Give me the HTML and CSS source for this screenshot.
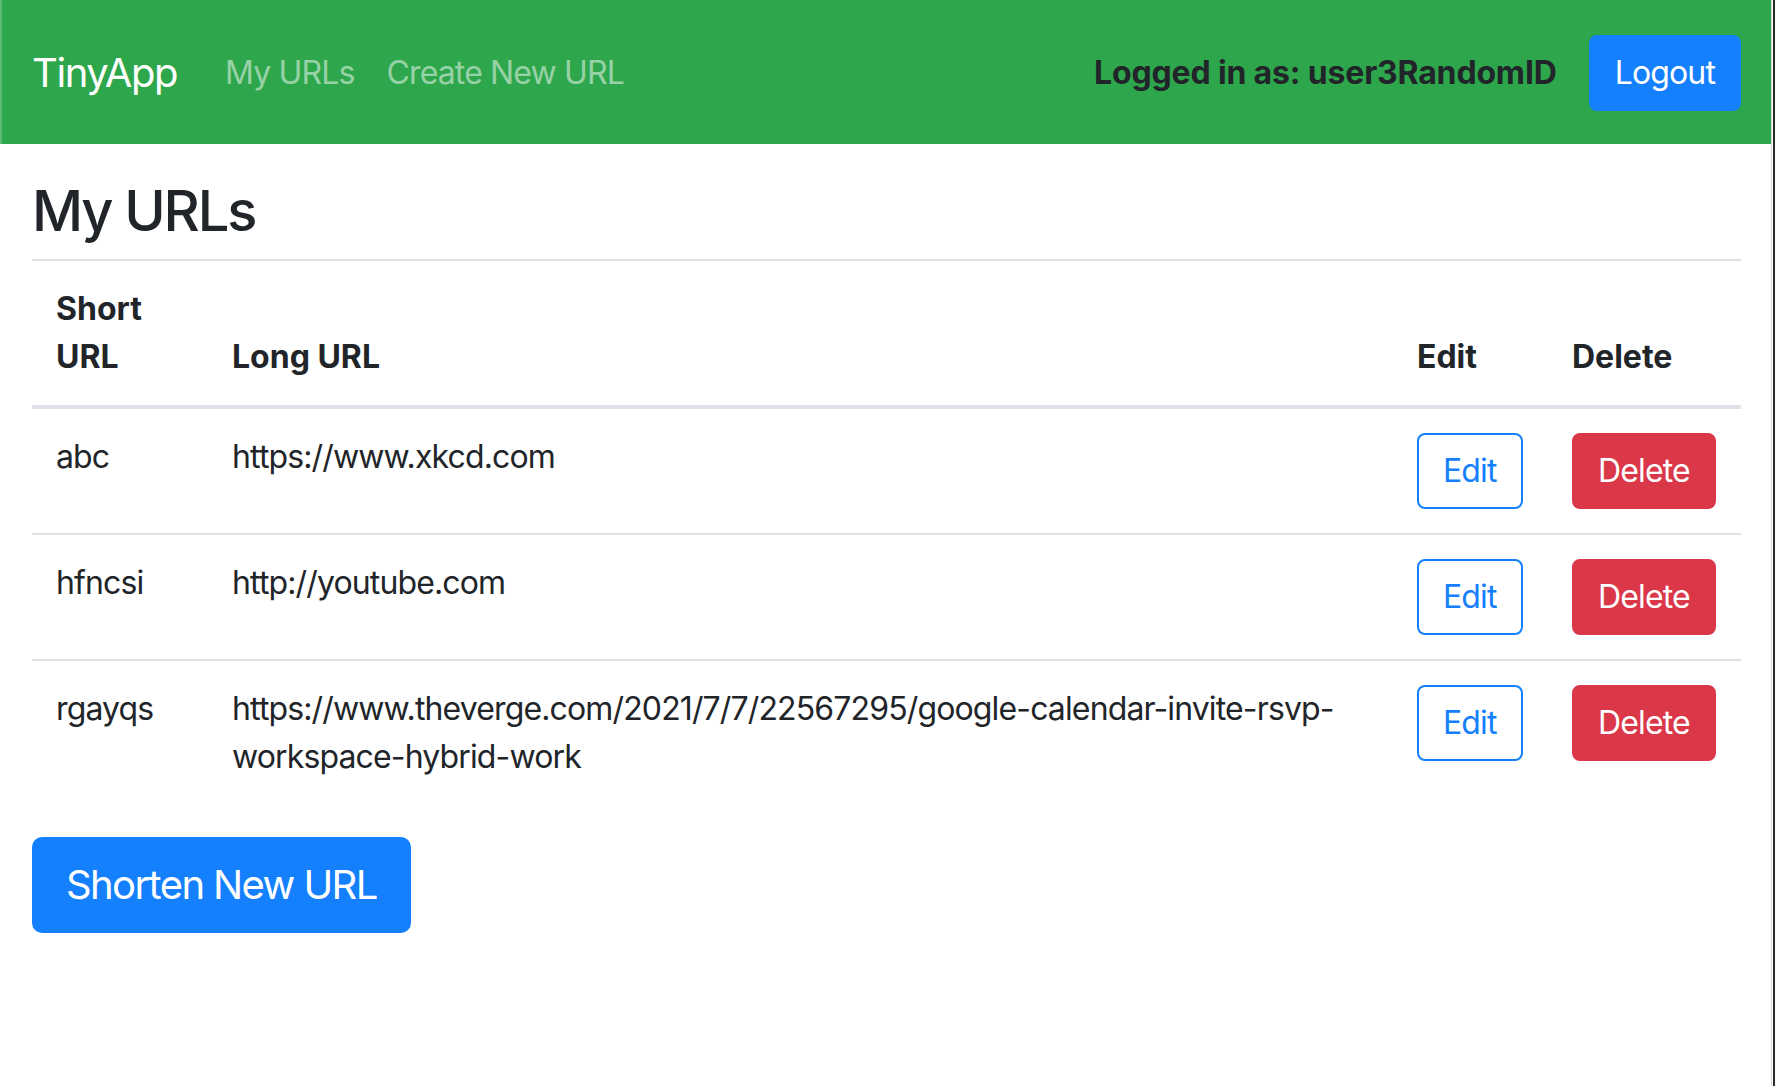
FILE: index.html
```html
<!DOCTYPE html>
<html lang="en">
<head>
<meta charset="utf-8">
<title>TinyApp</title>
<link rel="stylesheet" href="styles.css">
</head>
<body>
<div class="frame">
  <div class="page">
    <nav class="navbar">
      <a class="brand" href="#">TinyApp</a>
      <div class="nav-links">
        <a class="nav-link" href="#">My URLs</a>
        <a class="nav-link" href="#">Create New URL</a>
      </div>
      <div class="nav-right">
        <span class="login-text">Logged in as: user3RandomID</span>
        <button class="btn btn-primary">Logout</button>
      </div>
    </nav>
    <main class="main">
      <h3 class="title">My URLs</h3>
      <table class="table">
        <colgroup>
          <col class="col-short">
          <col class="col-long">
          <col class="col-edit">
          <col class="col-delete">
        </colgroup>
        <thead>
          <tr>
            <th>Short URL</th>
            <th>Long URL</th>
            <th>Edit</th>
            <th>Delete</th>
          </tr>
        </thead>
        <tbody>
          <tr>
            <td>abc</td>
            <td>https://www.xkcd.com</td>
            <td><button class="btn btn-outline">Edit</button></td>
            <td><button class="btn btn-danger">Delete</button></td>
          </tr>
          <tr>
            <td>hfncsi</td>
            <td>http://youtube.com</td>
            <td><button class="btn btn-outline">Edit</button></td>
            <td><button class="btn btn-danger">Delete</button></td>
          </tr>
          <tr>
            <td>rgayqs</td>
            <td>https://www.theverge.com/2021/7/7/22567295/google-calendar-invite-rsvp-workspace-hybrid-work</td>
            <td><button class="btn btn-outline">Edit</button></td>
            <td><button class="btn btn-danger">Delete</button></td>
          </tr>
        </tbody>
      </table>
      <button class="btn btn-primary btn-lg">Shorten New URL</button>
    </main>
  </div>
</div>
</body>
</html>
```
FILE: styles.css
```css
html, body {
  margin: 0;
  padding: 0;
  height: 100%;
  background: #ffffff;
}

body {
  font-family: Inter, "Liberation Sans", sans-serif;
  font-size: 32px;
  line-height: 1.5;
  letter-spacing: -0.027em;
  color: #212529;
}

.frame {
  width: 1775px;
  min-height: 100%;
  box-sizing: border-box;
  border-right: 2px solid #2a2a22;
}

.page {
  width: 1772px;
  min-height: 1086px;
  box-sizing: border-box;
  border-right: 1px solid #d8d8d8;
}

.navbar {
  display: flex;
  align-items: center;
  height: 144px;
  box-sizing: border-box;
  padding: 2px 30px 0 30px;
  background: #2ea64b;
  border-left: 2px solid #5cba70;
}

.brand {
  font-size: 40px;
  line-height: 60px;
  letter-spacing: -0.035em;
  padding: 10px 0;
  margin-right: 32px;
  color: #ffffff;
  text-decoration: none;
}

.nav-links {
  display: flex;
}

.nav-link {
  padding: 0 16px;
  color: rgba(255, 255, 255, 0.5);
  text-decoration: none;
}

.nav-right {
  margin-left: auto;
  display: flex;
  align-items: center;
}

.login-text {
  font-weight: 700;
  letter-spacing: -0.005em;
  margin-right: 32px;
  color: #212529;
}

.btn {
  font-family: inherit;
  font-size: 32px;
  line-height: 48px;
  letter-spacing: -0.027em;
  padding: 12px 24px;
  border: 2px solid transparent;
  border-radius: 8px;
  cursor: pointer;
  display: inline-block;
}

.btn-primary {
  background: #1580fd;
  border-color: #1580fd;
  color: #ffffff;
}

.btn-outline {
  background: #ffffff;
  border-color: #1580fd;
  color: #1580fd;
}

.btn-danger {
  background: #da3749;
  border-color: #da3749;
  color: #ffffff;
}

.btn-lg {
  font-size: 40px;
  line-height: 60px;
  letter-spacing: -0.04em;
  padding: 16px 32px;
  border-radius: 10px;
}

.main {
  padding: 34px 30px 0 32px;
}

.title {
  font-size: 56px;
  font-weight: 500;
  line-height: 1.2;
  letter-spacing: -0.038em;
  margin: 0 0 14px 0;
}

.table {
  width: 100%;
  border-collapse: collapse;
  margin-bottom: 32px;
  table-layout: fixed;
}

.col-short { width: 176px; }
.col-edit { width: 155px; }
.col-delete { width: 193px; }

.table th,
.table td {
  padding: 24px;
  text-align: left;
  vertical-align: top;
  border-top: 2px solid #dee2e6;
}

.table th {
  font-weight: 700;
  letter-spacing: 0;
}

.table thead th {
  vertical-align: bottom;
  border-bottom: 4px solid #dee2e6;
}
```
